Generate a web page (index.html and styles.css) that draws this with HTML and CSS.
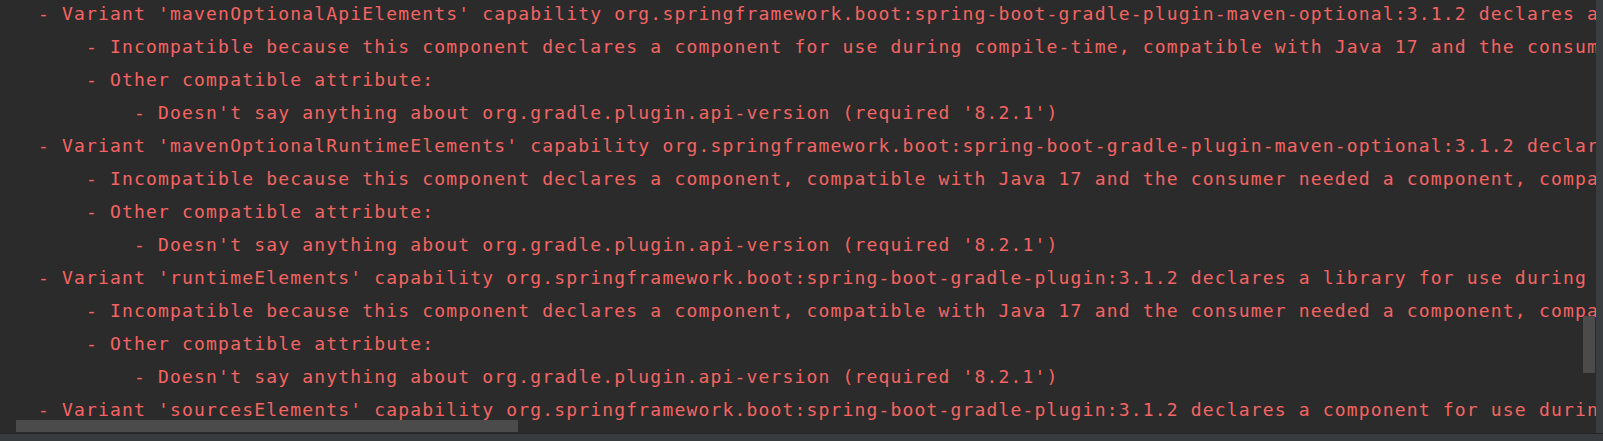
FILE: index.html
```html
<!DOCTYPE html>
<html lang="en">
<head>
  <meta charset="UTF-8">
  <title>Build output</title>
  <link rel="stylesheet" href="styles.css">
</head>
<body>
  <div class="window">
    <div class="main">
      <div class="console">
        <div class="lines">
          <div class="line">   - Variant 'mavenOptionalApiElements' capability org.springframework.boot:spring-boot-gradle-plugin-maven-optional:3.1.2 declares a library for use during compile-time, packaged as a jar, and its dependencies declared externally:</div>
          <div class="line">       - Incompatible because this component declares a component for use during compile-time, compatible with Java 17 and the consumer needed a component for use during runtime, compatible with Java 11</div>
          <div class="line">       - Other compatible attribute:</div>
          <div class="line">           - Doesn't say anything about org.gradle.plugin.api-version (required '8.2.1')</div>
          <div class="line">   - Variant 'mavenOptionalRuntimeElements' capability org.springframework.boot:spring-boot-gradle-plugin-maven-optional:3.1.2 declares a library for use during runtime, packaged as a jar, and its dependencies declared externally:</div>
          <div class="line">       - Incompatible because this component declares a component, compatible with Java 17 and the consumer needed a component, compatible with Java 11</div>
          <div class="line">       - Other compatible attribute:</div>
          <div class="line">           - Doesn't say anything about org.gradle.plugin.api-version (required '8.2.1')</div>
          <div class="line">   - Variant 'runtimeElements' capability org.springframework.boot:spring-boot-gradle-plugin:3.1.2 declares a library for use during runtime, packaged as a jar, and its dependencies declared externally:</div>
          <div class="line">       - Incompatible because this component declares a component, compatible with Java 17 and the consumer needed a component, compatible with Java 11</div>
          <div class="line">       - Other compatible attribute:</div>
          <div class="line">           - Doesn't say anything about org.gradle.plugin.api-version (required '8.2.1')</div>
          <div class="line">   - Variant 'sourcesElements' capability org.springframework.boot:spring-boot-gradle-plugin:3.1.2 declares a component for use during runtime, and its dependencies declared externally:</div>
        </div>
        <div class="vthumb"></div>
        <div class="hthumb"></div>
      </div>
      <div class="edge"></div>
    </div>
    <div class="footer"></div>
  </div>
</body>
</html>
```

FILE: styles.css
```css
body {
  margin: 0;
  background-color: #2b2b2b;
  overflow: hidden;
}
.window {
  display: flex;
  flex-direction: column;
  width: 1603px;
  height: 441px;
}
.main {
  display: flex;
  height: 433px;
}
.console {
  position: relative;
  flex: 1;
  overflow: hidden;
  background-color: #2b2b2b;
}
.lines {
  margin-top: -3px;
  padding-left: 2px;
}
.line {
  height: 33px;
  line-height: 33px;
  white-space: pre;
  font-family: "DejaVu Sans Mono", monospace;
  font-size: 18px;
  letter-spacing: 1.17px;
  color: #f56462;
}
.edge {
  width: 7px;
  background-color: #3a3d3f;
}
.footer {
  height: 8px;
  background-color: #383b3d;
  border-top: 1px solid #262626;
  box-sizing: border-box;
}
.vthumb {
  position: absolute;
  left: 1583px;
  top: 316px;
  width: 12px;
  height: 57px;
  background-color: #4b4b4b;
}
.hthumb {
  position: absolute;
  left: 16px;
  top: 420px;
  width: 502px;
  height: 12px;
  background-color: #4b4b4b;
}
```
